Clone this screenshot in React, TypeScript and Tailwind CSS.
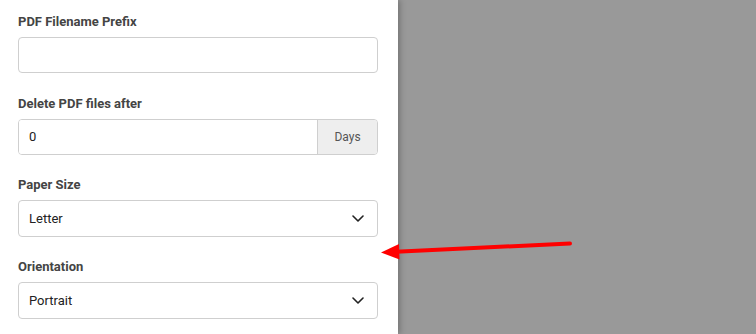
import React from 'react';

const font = { fontFamily: 'Roboto, "Liberation Sans", sans-serif' };

const Label: React.FC<{ text: string }> = ({ text }) => (
  <div className="h-[20px] leading-[20px] text-[13px] font-bold text-[#444] mb-[5px]">{text}</div>
);

const Chevron = () => (
  <svg width="12" height="7" viewBox="0 0 12 7" fill="none" className="shrink-0">
    <path d="M1 1l5 5 5-5" stroke="#222" strokeWidth="1.6" strokeLinecap="round" strokeLinejoin="round" />
  </svg>
);

const SelectBox: React.FC<{ value: string }> = ({ value }) => (
  <div className="h-[37px] w-[360px] flex items-center justify-between pl-[10px] pr-[13px] border border-[#cfcfcf] rounded-[4px] bg-white text-[13px] text-[#222]">
    <span>{value}</span>
    <Chevron />
  </div>
);

export default function App() {
  return (
    <div className="relative w-[756px] h-[334px] flex bg-[#999999] overflow-hidden" style={font}>
      <div className="w-[398px] h-full bg-white pl-[18px] pt-[12px] shadow-[2px_0_6px_rgba(0,0,0,0.25)] z-10">
        <div className="mb-[21px]">
          <Label text="PDF Filename Prefix" />
          <div className="h-[36px] w-[360px] border border-[#cfcfcf] rounded-[4px] bg-white" />
        </div>
        <div className="mb-[20px]">
          <Label text="Delete PDF files after" />
          <div className="h-[36px] w-[360px] flex border border-[#cfcfcf] rounded-[4px] overflow-hidden text-[13px]">
            <div className="flex-1 flex items-center pl-[10px] text-[#222] bg-white">0</div>
            <div className="w-[60px] flex items-center justify-center bg-[#eeeeee] border-l border-[#cfcfcf] text-[#555] text-[12px]">
              Days
            </div>
          </div>
        </div>
        <div className="mb-[20px]">
          <Label text="Paper Size" />
          <SelectBox value="Letter" />
        </div>
        <div>
          <Label text="Orientation" />
          <SelectBox value="Portrait" />
        </div>
      </div>
      <div className="flex-1" />
      <svg className="absolute left-0 top-0 z-20 pointer-events-none" width="756" height="334" viewBox="0 0 756 334">
        <line x1="570" y1="243.5" x2="396" y2="251.8" stroke="#ff0000" strokeWidth="4" strokeLinecap="round" />
        <polygon points="381,252.5 399,244 399.5,259.5" fill="#ff0000" />
      </svg>
    </div>
  );
}
